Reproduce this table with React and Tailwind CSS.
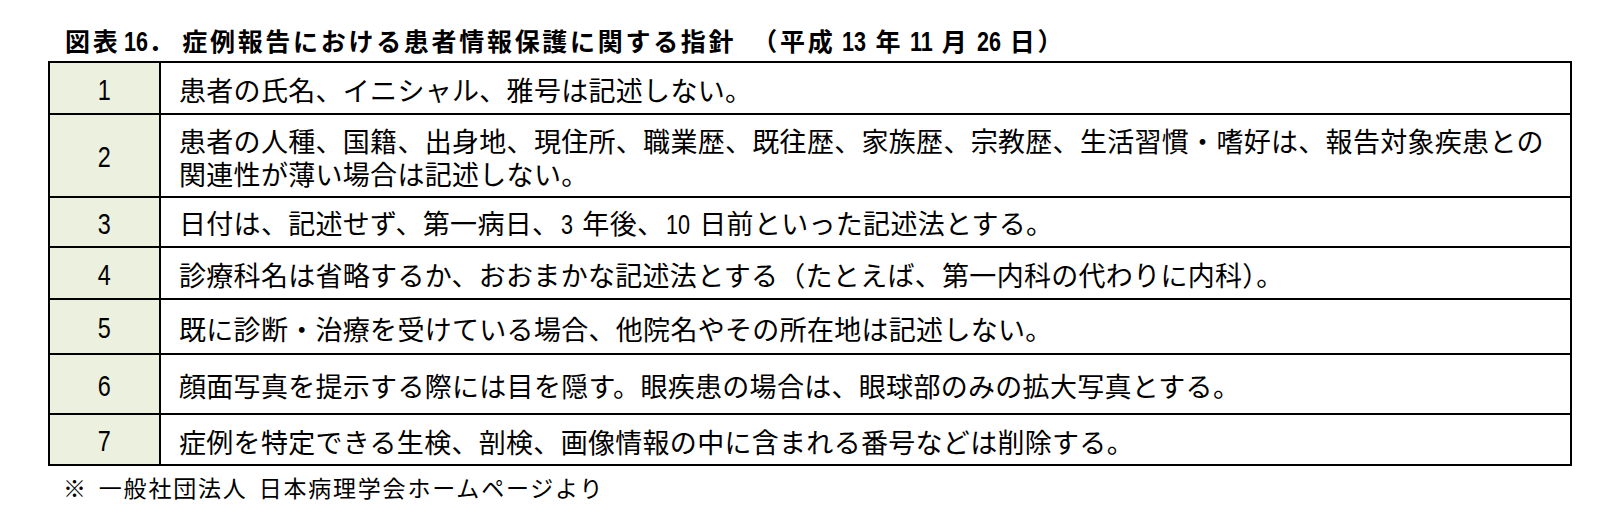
import React from "react";

const font = "font-['Noto_Sans_CJK_JP',sans-serif]";

function Sp({ w }) {
  return <span className={`inline-block ${w}`} />;
}

function TNum({ children, mr }) {
  return (
    <span
      className={`inline-block origin-left scale-x-[0.77] font-['Liberation_Sans',sans-serif] text-[28px] font-bold tracking-normal ${mr}`}
    >
      {children}
    </span>
  );
}

function BNum({ children, mr }) {
  return (
    <span
      className={`inline-block origin-left scale-x-[0.8] font-['Liberation_Sans',sans-serif] text-[27px] tracking-normal ${mr}`}
    >
      {children}
    </span>
  );
}

const rows = [
  { n: "1", h: "h-[50px]", lines: [["患者の氏名、イニシャル、雅号は記述しない。"]] },
  {
    n: "2",
    h: "h-[83px]",
    lines: [
      ["患者の人種、国籍、出身地、現住所、職業歴、既往歴、家族歴、宗教歴、生活習慣・嗜好は、報告対象疾患との"],
      ["関連性が薄い場合は記述しない。"],
    ],
  },
  {
    n: "3",
    h: "h-[50px]",
    lines: [
      [
        "日付は、記述せず、第一病日、",
        <Sp key="a" w="w-[2px]" />,
        <BNum key="b" mr="mr-[-3px]">3</BNum>,
        <Sp key="c" w="w-[9px]" />,
        "年後、",
        <Sp key="d" w="w-[2px]" />,
        <BNum key="e" mr="mr-[-6px]">10</BNum>,
        <Sp key="f" w="w-[9px]" />,
        "日前といった記述法とする。",
      ],
    ],
  },
  { n: "4", h: "h-[52px]", lines: [["診療科名は省略するか、おおまかな記述法とする（たとえば、第一内科の代わりに内科）。"]] },
  { n: "5", h: "h-[55px]", lines: [["既に診断・治療を受けている場合、他院名やその所在地は記述しない。"]] },
  { n: "6", h: "h-[60px]", lines: [["顔面写真を提示する際には目を隠す。眼疾患の場合は、眼球部のみの拡大写真とする。"]] },
  { n: "7", h: "h-[51px]", lines: [["症例を特定できる生検、剖検、画像情報の中に含まれる番号などは削除する。"]] },
];

export default function App() {
  return (
    <div className={`w-[1623px] h-[518px] bg-white text-black ${font}`}>
      <div className="pt-[23px] pl-[65px] text-[25px] leading-[34px] font-bold tracking-[2.7px] whitespace-nowrap">
        図表
        <Sp w="w-[4px]" />
        <TNum mr="mr-[-7px]">16</TNum>
        ．
        <Sp w="w-[6px]" />
        症例報告における患者情報保護に関する指針
        <Sp w="w-[16px]" />
        （平成
        <Sp w="w-[7px]" />
        <TNum mr="mr-[-7px]">13</TNum>
        <Sp w="w-[9px]" />
        年
        <Sp w="w-[7px]" />
        <TNum mr="mr-[-7px]">11</TNum>
        <Sp w="w-[9px]" />
        月
        <Sp w="w-[7px]" />
        <TNum mr="mr-[-7px]">26</TNum>
        <Sp w="w-[9px]" />
        日）
      </div>
      <div className="mt-[2px] ml-[48px] w-[1524px] border-2 border-black">
        {rows.map((r, i) => (
          <div
            key={r.n}
            className={`flex ${r.h} ${i > 0 ? "border-t-2 border-black" : ""}`}
          >
            <div className="w-[111px] shrink-0 border-r-2 border-black bg-[#ebf1de] flex items-center justify-center pt-[3px] leading-[30px]">
              <span className="inline-block scale-x-[0.78] font-['Liberation_Sans',sans-serif] text-[30px]">
                {r.n}
              </span>
            </div>
            <div className="flex-1 flex flex-col justify-center pl-[18px] pt-[3px] text-[27px] leading-[33px] tracking-[0.3px] whitespace-nowrap">
              {r.lines.map((l, j) => (
                <div key={j}>{l}</div>
              ))}
            </div>
          </div>
        ))}
      </div>
      <div className="mt-[6px] pl-[63px] text-[23px] leading-[30px] tracking-[1.8px] whitespace-nowrap">
        ※
        <Sp w="w-[11px]" />
        一般社団法人
        <Sp w="w-[11px]" />
        日本病理学会ホームページより
      </div>
    </div>
  );
}
